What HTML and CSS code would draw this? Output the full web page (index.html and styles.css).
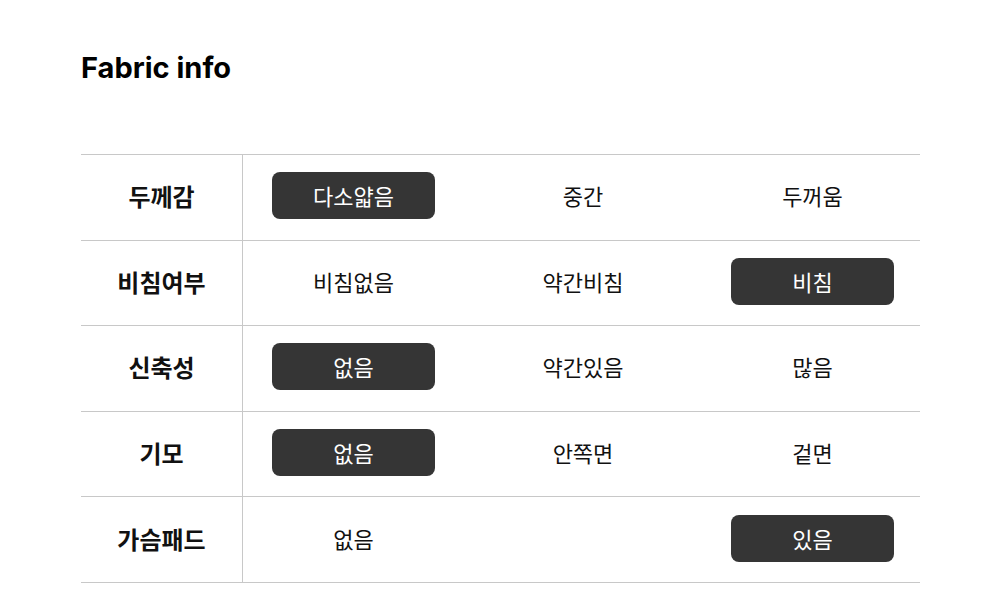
FILE: index.html
```html
<!DOCTYPE html>
<html lang="ko">
<head>
<meta charset="utf-8">
<link rel="stylesheet" href="styles.css">
</head>
<body>
<div class="page">
  <h1 class="title">Fabric info</h1>
  <div class="table">
    <div class="row">
      <div class="label">두께감</div>
      <div class="opts">
        <div class="opt on">다소얇음</div>
        <div class="opt">중간</div>
        <div class="opt">두꺼움</div>
      </div>
    </div>
    <div class="row">
      <div class="label">비침여부</div>
      <div class="opts">
        <div class="opt">비침없음</div>
        <div class="opt">약간비침</div>
        <div class="opt on">비침</div>
      </div>
    </div>
    <div class="row">
      <div class="label">신축성</div>
      <div class="opts">
        <div class="opt on">없음</div>
        <div class="opt">약간있음</div>
        <div class="opt">많음</div>
      </div>
    </div>
    <div class="row">
      <div class="label">기모</div>
      <div class="opts">
        <div class="opt on">없음</div>
        <div class="opt">안쪽면</div>
        <div class="opt">겉면</div>
      </div>
    </div>
    <div class="row">
      <div class="label">가슴패드</div>
      <div class="opts">
        <div class="opt">없음</div>
        <div class="opt"></div>
        <div class="opt on">있음</div>
      </div>
    </div>
  </div>
</div>
</body>
</html>
```

FILE: styles.css
```css
* { box-sizing: border-box; }
html, body { margin: 0; padding: 0; background: #fff; }
body {
  font-family: Inter, "Noto Sans CJK KR", sans-serif;
  color: #111;
}
.page {
  padding: 49px 80px 0 81px;
}
.title {
  margin: 0;
  font-size: 29px;
  font-weight: 700;
  line-height: 38px;
  letter-spacing: 0;
  color: #000;
}
.table {
  margin-top: 67px;
  border-top: 1.5px solid #c8c8c8;
  width: 839px;
}
.row {
  display: flex;
  height: 85.6px;
  border-bottom: 1.5px solid #c8c8c8;
}
.label {
  width: 162px;
  border-right: 1px solid #c8c8c8;
  display: flex;
  align-items: center;
  justify-content: center;
  font-family: "Noto Sans CJK KR", sans-serif;
  font-size: 24px;
  font-weight: 700;
  color: #111;
  padding-bottom: 3px;
}
.opts {
  flex: 1;
  display: flex;
  align-items: center;
  padding-left: 29px;
  padding-bottom: 3px;
  gap: 66.5px;
}
.opt {
  width: 163px;
  height: 47px;
  display: flex;
  align-items: center;
  justify-content: center;
  font-family: "Noto Sans CJK KR", sans-serif;
  font-size: 22px;
  color: #111;
  border-radius: 8px;
  padding-bottom: 1px;
}
.opt.on {
  background: #353535;
  color: #fff;
}
```
